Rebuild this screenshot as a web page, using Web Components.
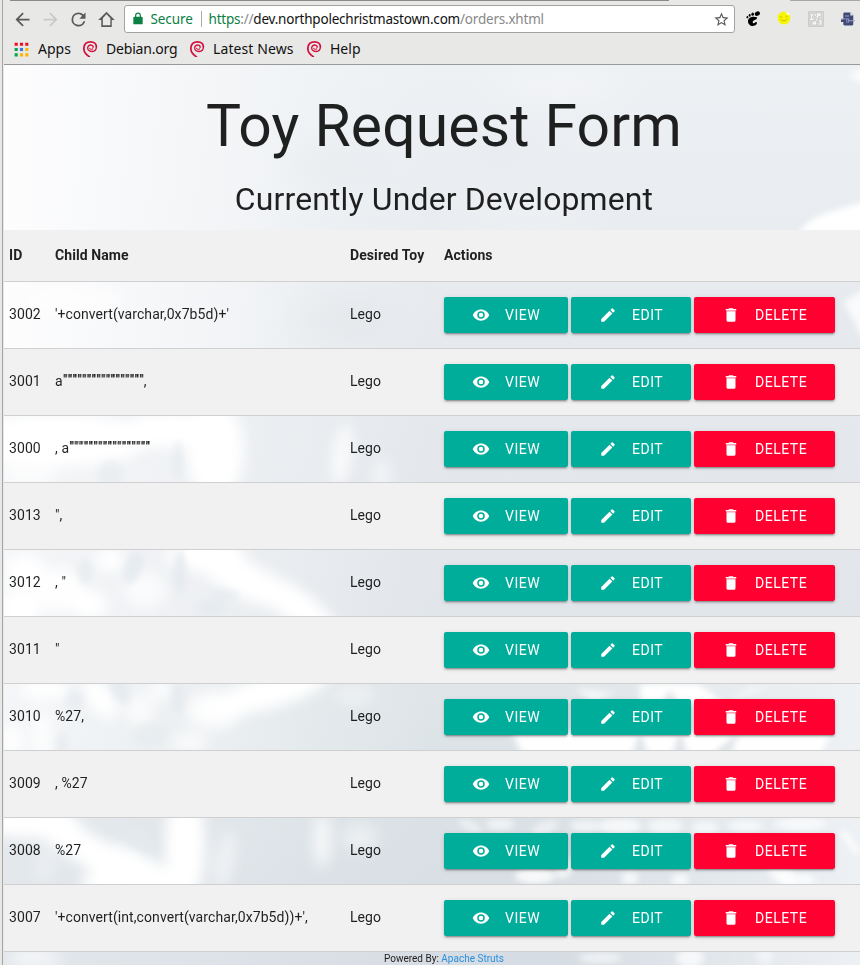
<!DOCTYPE html>
<html lang="en">
<head>
<meta charset="utf-8">
<title>Toy Request Form</title>
<style>
html,body{margin:0;height:100%;overflow:hidden}
body{background:#e8e8e6;font-family:Roboto,sans-serif;font-size:14px;line-height:21px;color:rgba(0,0,0,.87)}
</style>
</head>
<body>
<toy-app></toy-app>
<script>
const define = (name, html, after) => customElements.define(name, class extends HTMLElement {
  connectedCallback() {
    if (this.shadowRoot) return;
    const t = document.createElement('template');
    t.innerHTML = typeof html === 'function' ? html(this) : html;
    this.attachShadow({mode: 'open'}).appendChild(t.content.cloneNode(true));
    if (after) after(this);
  }
});

const ICONS = {
  back: ['#5a5a5a', '<path d="M20 11H7.83l5.59-5.59L12 4l-8 8 8 8 1.41-1.41L7.83 13H20z"/>'],
  forward: ['#c9c9c7', '<path d="M12 4l-1.41 1.41L16.17 11H4v2h12.17l-5.58 5.59L12 20l8-8z"/>'],
  reload: ['#5a5a5a', '<path d="M17.65 6.35A7.96 7.96 0 0 0 12 4a8 8 0 1 0 7.73 10h-2.08A6 6 0 1 1 12 6c1.66 0 3.14.69 4.22 1.78L13 11h7V4z"/>'],
  home: ['#5a5a5a', '<path d="M12 3.2 2.6 12.6H6V20.5h12v-7.9h3.4zM12 6l4.400 4.600v8.100H7.800v-8.100z" fill-rule="evenodd"/>'],
  lock: ['#0b8043', '<path d="M18 8h-1V6a5 5 0 0 0-10 0v2H6a2 2 0 0 0-2 2v11h16V10a2 2 0 0 0-2-2zM9 8V6a3 3 0 0 1 6 0v2z"/>'],
  star: ['#5a5a5a', '<path d="M22 9.24l-7.19-.62L12 2 9.19 8.63 2 9.24l5.46 4.73L5.82 21 12 17.27 18.18 21l-1.63-7.03zM12 15.4l-3.76 2.27 1-4.28-3.32-2.88 4.38-.38L12 6.1l1.71 4.04 4.38.38-3.32 2.88 1 4.28z"/>'],
  view: ['#fff', '<path d="M12 4.500C7 4.500 2.730 7.610 1 12c1.730 4.390 6 7.500 11 7.500s9.270-3.110 11-7.500c-1.730-4.390-6-7.500-11-7.500zM12 17a5 5 0 1 1 0-10 5 5 0 0 1 0 10zm0-8a3 3 0 1 0 0 6 3 3 0 0 0 0-6z"/>'],
  edit: ['#fff', '<path d="M3 17.25V21h3.75L17.81 9.940l-3.75-3.75zM20.71 7.040a1 1 0 0 0 0-1.410l-2.340-2.340a1 1 0 0 0-1.410 0l-1.830 1.830 3.750 3.750z"/>'],
  delete: ['#fff', '<path d="M6 19a2 2 0 0 0 2 2h8a2 2 0 0 0 2-2V7H6zM19 4h-3.500l-1-1h-5l-1 1H5v2h14z"/><path opacity=".55" d="M6 6h12v1H6z"/>'],
  apps: ['none', '<g><path fill="#f00b1e" d="M1 1h5v5H1zM9.500 1h5v5h-5zM18 1h5v5h-5z"/><path fill="#00a651" d="M1 9.500h5v5H1zM1 18h5v5H1z"/><path fill="#3b78e7" d="M9.500 9.500h5v5h-5z"/><path fill="#fbb400" d="M18 9.500h5v5h-5zM9.500 18h5v5h-5zM18 18h5v5h-5z"/></g>'],
  debian: ['none', '<g fill="none" stroke="#d1113f" stroke-linecap="round"><path stroke-width="2.600" d="M11 23.500C5 20 2.500 16 2.800 10.500 3.200 4.500 7.500 1.300 13 1.300c5 0 8.500 3 8.600 7.200"/><path stroke-width="2" d="M21.600 8.500c0 4.500-3 7-6.500 7.200-4 .2-6.800-2.300-6.600-5.400.2-3 2.700-4.600 5.200-4.200 2 .3 3.200 1.600 3 3.300"/><path stroke-width="1.600" d="M11.500 11c.5 1.500 3 2 4.500.8"/></g>'],
  foot: ['#000', '<ellipse cx="18.500" cy="4" rx="4" ry="3.200" transform="rotate(-25 18.500 4)"/><ellipse cx="11.500" cy="4.700" rx="1.900" ry="2.500"/><ellipse cx="7" cy="6.700" rx="1.500" ry="2.100"/><ellipse cx="3.600" cy="9.200" rx="1.300" ry="1.800"/><path d="M17.500 9.500C12 7.500 5 9.500 4.500 15c-.4 5 4.500 8.500 9 7.300 4-1 5.500-5 3.500-5.800-2-.7-2 2-4 1.800-2.500-.3-1.500-4 1-4.600 3-.7 5.500-3 3.500-4.200z"/>'],
  smile: ['#f6f600', '<circle cx="12" cy="12" r="11"/><path fill="#fff" d="M14 .5l3 4 1.500-3 3 5-1 1-6-4z"/><path fill="none" stroke="#c8a800" stroke-width="1.400" d="M5 9l4 2.500M15 10.500l3-2M6 14c3 4 9 4 12-1"/>'],
  puzzle: ['none', '<path fill="#dcdcdb" stroke="#bdbdbd" d="M1 1h22v22H1z"/><g fill="#f6f6f6" stroke="#c2c2c2"><path d="M3 4h7v3H7v4h3v3H4v6H2v-9h2z"/><path d="M12 3h8v5h-4v3h-4zM8 15h5v6H5zM15 13h6v8h-6v-3h3z"/><circle cx="11" cy="6" r="2"/><circle cx="13" cy="13" r="2"/></g>'],
  doc: ['#3f4a78', '<path d="M4 3a2 2 0 0 1 2-2h10l5 5v15a2 2 0 0 1-2 2H6a2 2 0 0 1-2-2z"/><path fill="#e8e8e6" d="M16 1v5h5z"/><path fill="#9da5c6" d="M7 6h7v1.500H7zM0 11h10v2H0zM9 11h5v7H9zM14 14h10v2H14z"/><path fill="#3f4a78" d="M0 13h9v4H0zM10.500 13h2v3.500h-2z"/>']
};

define('ui-icon', el => {
  const [fill, body] = ICONS[el.getAttribute('name')], s = el.getAttribute('size') || 18;
  return `<style>:host{display:block;flex:none;width:${s}px;height:${s}px}svg{display:block;width:100%;height:100%}</style><svg viewBox="0 0 24 24" fill="${fill}">${body}</svg>`;
});

define('book-mark', el => `<style>
:host{display:flex;align-items:center;height:20px}
span{margin-left:var(--gap,9px);white-space:nowrap}
</style><ui-icon name="${el.getAttribute('icon')}" size="${el.getAttribute('size') || 16}"></ui-icon><span><slot></slot></span>`);

define('browser-bar', `<style>
:host{display:block;height:64px;background:#e8e8e6;border-bottom:1px solid #999;font:14px/20px "Noto Sans",sans-serif;color:#111;box-sizing:content-box}
.top{height:2px;display:flex;justify-content:space-between;margin-left:6px}
.top i{height:1px;width:659px;background:#8c8988}.top i+i{width:70px;background:#aaa8a6}
.nav{display:flex;align-items:center;height:34px;padding-left:7.500px}
.nav>ui-icon{margin-right:7px}
.url{display:flex;align-items:center;box-sizing:border-box;width:611px;height:28px;background:#fff;border:1px solid #a3a3a1;border-radius:3px;padding:0 4px 0 6px;font-size:13.500px;white-space:nowrap;margin-right:10px}
.sec{color:#0b8043;margin-left:6px;width:50px;letter-spacing:-.1px}
.sep{width:1px;height:16px;background:#aaa;margin-right:7px}
.addr{letter-spacing:-.21px}
.g{color:#0b8043}.l{color:#888}
.url ui-icon:last-child{margin-left:auto}
.marks{display:flex;padding:3px 0 0 10px}
</style>
<div class="top"><i></i><i></i></div>
<div class="nav">
<ui-icon name="back" size="21"></ui-icon><ui-icon name="forward" size="21"></ui-icon><ui-icon name="reload" size="21"></ui-icon><ui-icon name="home" size="21"></ui-icon>
<div class="url"><ui-icon name="lock" size="14"></ui-icon><span class="sec">Secure</span><span class="sep"></span><span class="addr"><span class="g">https</span><span class="l">://</span>dev.northpolechristmastown.com<span class="l">/orders.xhtml</span></span><ui-icon name="star" size="17"></ui-icon></div>
<ui-icon name="foot" size="16" style="margin-right:16px"></ui-icon><ui-icon name="smile" size="14" style="margin-right:17px;margin-top:-3px"></ui-icon><ui-icon name="puzzle" size="16" style="margin-right:17px"></ui-icon><ui-icon name="doc" size="14" style="margin-right:0"></ui-icon>
</div>
<div class="marks"><book-mark icon="apps" size="15" style="width:68px">Apps</book-mark><book-mark icon="debian" style="width:107px;--gap:8px;letter-spacing:-.2px">Debian.org</book-mark><book-mark icon="debian" style="width:117px;--gap:8px;letter-spacing:.1px">Latest News</book-mark><book-mark icon="debian" style="--gap:8px">Help</book-mark></div>`);

const blobs = (fill, list) => `<g fill="${fill}">` + list.map(([x, y, rx, ry, o = 1, r = 0]) => `<ellipse cx="${x}" cy="${y}" rx="${rx}" ry="${ry}" opacity="${o}" transform="rotate(${r} ${x} ${y})"/>`).join('') + '</g>';

define('snow-backdrop', `<style>:host{display:block;position:absolute;inset:0;overflow:hidden}svg{display:block}</style>
<svg width="856" height="900" viewBox="4 65 856 900">
<defs><linearGradient id="a" x1="0" y1="0" x2="0" y2="1"><stop offset="0" stop-color="#edf1f4"/><stop offset=".3" stop-color="#e6eaee"/><stop offset=".6" stop-color="#e2e6ea"/><stop offset=".75" stop-color="#dde4e7"/><stop offset="1" stop-color="#d6dce3"/></linearGradient>
<linearGradient id="b"><stop offset="0" stop-color="#fdfdfe"/><stop offset=".25" stop-color="#f6f7f9" stop-opacity=".8"/><stop offset=".5" stop-color="#f1f4f6" stop-opacity="0"/></linearGradient>
<linearGradient id="c"><stop offset=".65" stop-color="#f1f4f7" stop-opacity="0"/><stop offset="1" stop-color="#f1f4f7" stop-opacity=".85"/></linearGradient>
<filter id="f" x="-30%" y="-30%" width="160%" height="160%"><feGaussianBlur stdDeviation="7"/></filter>
<filter id="h" x="-30%" y="-30%" width="160%" height="160%"><feGaussianBlur stdDeviation="18"/></filter>
<filter id="s" x="-30%" y="-30%" width="160%" height="160%"><feGaussianBlur stdDeviation="3"/></filter></defs>
<path fill="url(#a)" d="M4 65h856v900H4z"/><path fill="url(#b)" d="M4 65h856v315H4z"/><path fill="url(#b)" opacity=".7" d="M4 380h856v400H4z"/><path fill="url(#b)" opacity=".3" d="M4 780h856v185H4z"/><path fill="url(#c)" d="M4 650h856v315H4z"/>
<g filter="url(#h)"><ellipse cx="340" cy="165" rx="50" ry="16" fill="#e9ebef"/><ellipse cx="500" cy="155" rx="28" ry="18" fill="#e7eaee"/><ellipse cx="560" cy="85" rx="70" ry="12" fill="#f5f5f7"/><ellipse cx="525" cy="215" rx="70" ry="10" fill="#f2f3f5"/><ellipse cx="350" cy="320" rx="50" ry="20" fill="#e4e8eb"/></g>
<g filter="url(#s)" fill="#fff"><path d="M799 234c10-20 35-22 70-34v36z"/><path d="M847 76l20-10v18zM844 302l22-14v56z" opacity=".8"/></g>
<g filter="url(#f)">${blobs('#fff', [
  [75, 300, 50, 16, .6], [60, 440, 90, 26], [170, 430, 50, 18], [215, 450, 28, 50], [30, 470, 26, 18, .6], [342, 455, 10, 32, .75, 8], [382, 475, 10, 16, .5],
  [25, 570, 20, 16], [60, 590, 26, 22, .9], [20, 610, 20, 22], [90, 605, 18, 14], [110, 560, 14, 12], [145, 590, 22, 18, .7], [205, 555, 40, 16], [245, 580, 50, 18, 1, 25], [295, 605, 50, 16, 1, 35],
  [45, 690, 26, 10], [100, 698, 12, 24, 1, -35], [42, 735, 11, 26, .8], [140, 710, 14, 16, .7], [160, 690, 12, 10, .8], [215, 710, 28, 18, .9], [270, 692, 60, 16, 1, -15], [190, 742, 18, 10, .7], [12, 740, 10, 16], [355, 695, 20, 10, .4],
  [30, 822, 50, 16], [80, 845, 50, 16, 1, 30], [130, 872, 55, 22, 1, 25], [185, 845, 20, 60], [45, 865, 10, 18, .3], [322, 840, 8, 28, .8], [360, 838, 18, 14, .45], [225, 860, 10, 30, .5, 12], [35, 958, 28, 10, .6], [110, 884, 30, 12]
])}</g>
<g filter="url(#s)">${blobs('#e4eaee', [[178, 460, 5, 20, .5], [110, 475, 12, 14, .5], [133, 568, 8, 16, .8, 20], [85, 572, 7, 12, .7], [180, 572, 6, 22, .9], [212, 608, 14, 8, .8], [225, 595, 14, 6, .6], [120, 690, 8, 14, .8, -30], [178, 698, 5, 16, .9], [150, 735, 16, 12, .5], [75, 700, 9, 10, .6], [62, 745, 5, 12, .7], [140, 838, 18, 10, .7, 40], [118, 828, 14, 8, .6, 40]])}</g>
<g filter="url(#s)" fill="#fff"><path d="M640 684h58l28 20h-85zM512 732h320l-12 22H522z"/><path d="M575 688l40 4-22 12zM770 686l-20 2-30 18z" opacity=".65"/></g>
<g filter="url(#s)">${blobs('#fff', [[470, 826, 12, 5, .5, 25], [500, 824, 14, 6, .6], [545, 828, 14, 6, .5, -20], [585, 826, 15, 6, .6], [620, 826, 22, 8, .7], [665, 826, 18, 8, .6], [705, 828, 14, 7, .6], [745, 826, 18, 6, .6], [800, 824, 26, 7, .6], [535, 876, 20, 8, .8], [565, 868, 8, 12, .7, 35], [630, 878, 9, 7, .7], [680, 880, 9, 7, .7], [780, 870, 10, 20, .8, -40], [800, 880, 16, 6, .7], [850, 842, 4, 16, .7, -35], [600, 958, 22, 5, .6], [690, 958, 14, 10, .7], [765, 956, 9, 8, .5]])}</g>
<g filter="url(#s)" fill="#dfe4e8"><path d="M670 690l8 12h-16zM640 732l8 22h-16zM680 732l8 22h-16zM740 732l-10 22h-18z"/></g>
</svg>`);

define('action-button', el => `<style>
:host{display:flex;align-items:center;box-sizing:border-box;height:36px;width:${el.getAttribute('w')}px;padding:0 0 0 28px;background:${el.getAttribute('kind') === 'delete' ? '#ff0030' : '#00ac9a'};color:#fff;border-radius:2px;letter-spacing:.5px;white-space:nowrap;box-shadow:0 2px 2px 0 rgba(0,0,0,.14),0 1px 5px 0 rgba(0,0,0,.12),0 3px 1px -2px rgba(0,0,0,.2)}
ui-icon{margin-right:15px}span{padding-top:1px}
</style><ui-icon name="${el.getAttribute('kind')}"></ui-icon><span><slot></slot></span>`);

const rowStyle = `:host{display:grid;grid-template-columns:46px 295px 94px 1fr;align-items:center;box-sizing:border-box;border-bottom:1px solid #cfcfd0;padding:0 5px;letter-spacing:.08px}
.acts{display:flex;gap:3px}.c{position:relative;top:-1px;white-space:pre}`;
define('toy-head', `<style>${rowStyle}:host{height:52px;background:#f1f1f1;font-weight:700}.c{top:0}</style><span class="c">ID</span><span class="c">Child Name</span><span class="c">Desired Toy</span><span class="c">Actions</span>`);
define('toy-row', el => `<style>${rowStyle}:host{height:67px}:host(:nth-of-type(even)){background:#f1f1f1}</style>
<span class="c">${el.getAttribute('num')}</span><span class="c"><slot></slot></span><span class="c">Lego</span>
<div class="acts"><action-button kind="view" w="124">VIEW</action-button><action-button kind="edit" w="120">EDIT</action-button><action-button kind="delete" w="141">DELETE</action-button></div>`);

/* A run of short raised ticks, drawn from the top part of each quote mark. */
define('quote-run', `<style>:host{display:inline-block;width:81px;height:21px;vertical-align:top;clip-path:inset(0 0 13px 0);letter-spacing:.280px;font-kerning:none;line-height:19px;text-shadow:.8px 0 0 rgba(0,0,0,.6)}</style><slot></slot>`);

const q = '<quote-run>' + '"'.repeat(17) + '</quote-run>';
const rows = [[3002, "'+convert(varchar,0x7b5d)+'"], [3001, 'a' + q + ','], [3000, ', a' + q], [3013, '",'], [3012, ', "'], [3011, '"'], [3010, '%27,'], [3009, ', %27'], [3008, '%27'], [3007, "'+convert(int,convert(varchar,0x7b5d))+',"]];

define('toy-page', `<style>
:host{display:block;position:relative;height:900px;overflow:hidden;margin-left:1px}
main{position:relative}
header{height:165px;text-align:center;width:880px;overflow:hidden}
h1{font-size:58.800px;line-height:64.700px;font-weight:400;margin:29.400px 0 23.500px;letter-spacing:.18px}
h4{font-size:31.920px;line-height:35.100px;font-weight:400;margin:-1px 0 0;letter-spacing:.16px}
footer{font-size:10px;line-height:14px;text-align:center;width:880px}
a{color:#2b8fdd}
</style><snow-backdrop></snow-backdrop>
<main><header><h1>Toy Request Form</h1><h4>Currently Under Development</h4></header><toy-head></toy-head><div id="rows"></div><footer>Powered By: <a>Apache Struts</a></footer></main>`, el => {
  const box = el.shadowRoot.getElementById('rows');
  for (const [n, name] of rows) {
    const r = document.createElement('toy-row');
    r.setAttribute('num', n);
    r.innerHTML = name;
    box.appendChild(r);
  }
});

define('toy-app', `<style>:host{display:block;box-sizing:border-box;height:965px;padding-left:2px}.win{border-left:1px solid #a4a4a4}</style><div class="win"><browser-bar style="margin-left:1px"></browser-bar><toy-page></toy-page></div>`);
</script>
</body>
</html>
